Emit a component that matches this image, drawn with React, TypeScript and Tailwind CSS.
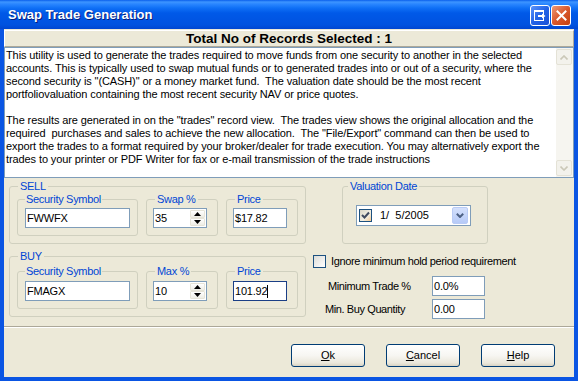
import React from "react";

const lines: string[] = [
  "This utility is used to generate the trades required to move funds from one security to another in the selected",
  "accounts. This is typically used to swap mutual funds or to generated trades into or out of a security, where the",
  'second security is "(CASH)" or a money market fund.  The valuation date should be the most recent',
  "portfoliovaluation containing the most recent security NAV or price quotes.",
  "",
  'The results are generated in on the "trades" record view.  The trades view shows the original allocation and the',
  'required  purchases and sales to achieve the new allocation.  The "File/Export" command can then be used to',
  "export the trades to a format required by your broker/dealer for trade execution. You may alternatively export the",
  "trades to your printer or PDF Writer for fax or e-mail transmission of the trade instructions",
];

function TextBox({ value, w, focused }: { value: string; w: string; focused?: boolean }) {
  return (
    <div
      className={`${w} h-[20px] border ${focused ? "border-[#1b3f86]" : "border-[#7f9db9]"} bg-white flex items-center pl-[1px] text-[11px] leading-[18px] text-black tracking-[-0.2px]`}
    >
      <span>{value}</span>
      {focused && <span className="inline-block w-[1px] h-[13px] bg-black" />}
    </div>
  );
}

function Arrow({ up }: { up?: boolean }) {
  return (
    <svg width="7" height="4" viewBox="0 0 7 4">
      {up ? <path d="M3.5 0 L7 4 L0 4 Z" fill="#000" /> : <path d="M0 0 L7 0 L3.5 4 Z" fill="#000" />}
    </svg>
  );
}

function Spin({ value }: { value: string }) {
  return (
    <div className="w-[54px] h-[20px] border border-[#7f9db9] bg-white flex text-[11px] leading-[18px] text-black">
      <span className="flex-1 pl-[1px]">{value}</span>
      <div className="w-[16px] flex flex-col py-[1px] pr-[1px]">
        <div className="flex-1 bg-[linear-gradient(to_bottom,#ffffff,#eeede5)] border border-[#e6e4d8] rounded-[1px] flex items-center justify-center">
          <Arrow up />
        </div>
        <div className="flex-1 bg-[linear-gradient(to_bottom,#ffffff,#eeede5)] border border-[#e6e4d8] rounded-[1px] flex items-center justify-center">
          <Arrow />
        </div>
      </div>
    </div>
  );
}

function Btn({ first, rest }: { first: string; rest: string }) {
  return (
    <div className="w-[74px] h-[23px] rounded-[3px] border border-[#003c74] bg-[linear-gradient(to_bottom,#ffffff_0%,#f7f6f2_50%,#ebe8dc_85%,#d8d3c3_100%)] flex items-center justify-center text-[11px] text-black">
      <span className="underline underline-offset-[1px]">{first}</span>
      <span>{rest}</span>
    </div>
  );
}

const LEG = "text-[11px] leading-[13px] text-[#0046d5] tracking-[-0.3px]";

function Row({ kind, sym, spin, price, focused, ptInner }: { kind: string; sym: string; spin: string; price: string; focused?: boolean; ptInner: string }) {
  const inPt = kind === "SELL" ? "pt-[2px]" : "pt-[3px]";
  return (
    <fieldset className={`w-[297px] border border-[#d0d0bf] rounded-[3px] pl-[7px] pr-[7px] pb-[7px] ${ptInner}`}>
      <legend className={`ml-[1px] px-[2px] ${LEG}`}>{kind}</legend>
      <div className="flex gap-[8px]">
        <fieldset className="w-[121px] border border-[#d0d0bf] rounded-[3px] pl-[7px] pb-[7px]">
          <legend className={`px-[1px] ${LEG}`}>Security Symbol</legend>
          <div className={inPt}>
            <TextBox value={sym} w="w-[105px]" />
          </div>
        </fieldset>
        <fieldset className="w-[72px] border border-[#d0d0bf] rounded-[3px] pl-[6px] pb-[7px]">
          <legend className={`ml-[2px] px-[2px] ${LEG}`}>{kind === "SELL" ? "Swap %" : "Max %"}</legend>
          <div className={inPt}>
            <Spin value={spin} />
          </div>
        </fieldset>
        <fieldset className="w-[72px] border border-[#d0d0bf] rounded-[3px] pl-[6px] pb-[7px]">
          <legend className={`ml-[2px] px-[2px] ${LEG}`}>Price</legend>
          <div className={inPt}>
            <TextBox value={price} w="w-[54px]" focused={focused} />
          </div>
        </fieldset>
      </div>
    </fieldset>
  );
}

export default function App() {
  return (
    <div className="w-[578px] h-[381px] flex flex-col bg-[#0a55e3] font-['Liberation_Sans',Arial,sans-serif] overflow-hidden">
      {/* Title bar */}
      <div className="h-[29px] shrink-0 flex items-center justify-between pl-[8px] pr-[7px] bg-[linear-gradient(to_bottom,#0a5fec_0px,#3d95ff_2px,#2a86ff_4px,#0f70f6_8px,#0059e8_13px,#0055e3_20px,#0052df_25px,#0046d0_29px)]">
        <span className="text-white font-bold text-[13px] [text-shadow:1px_1px_0_#0a1e7a]">Swap Trade Generation</span>
        <div className="flex gap-[1px] mt-[2px]">
          <div className="w-[20px] h-[21px] rounded-[3px] border border-white bg-[linear-gradient(135deg,#5b95fb,#2262e6_50%,#1a52d6)] flex items-center justify-center">
            <svg width="12" height="11" viewBox="0 0 12 11">
              <rect x="0.5" y="0.5" width="9" height="10" fill="none" stroke="#fff" strokeWidth="1" />
              <rect x="0" y="0" width="10" height="2" fill="#fff" />
              <path d="M4 6 H10" stroke="#fff" strokeWidth="2" />
              <path d="M8 3.5 L11.5 6 L8 8.5 Z" fill="#fff" />
            </svg>
          </div>
          <div className="w-[20px] h-[21px] rounded-[3px] border border-white bg-[linear-gradient(135deg,#ee9a77,#d9582c_50%,#c4410f)] flex items-center justify-center">
            <svg width="11" height="11" viewBox="0 0 11 11">
              <path d="M1.5 1.5 L9.5 9.5 M9.5 1.5 L1.5 9.5" stroke="#fff" strokeWidth="2" strokeLinecap="square" />
            </svg>
          </div>
        </div>
      </div>

      {/* Body */}
      <div className="flex-1 mx-[4px] mb-[4px] bg-[#ece9d8] flex flex-col pt-[1px] text-black">
        <div className="h-[17px] border-t border-l border-white border-b border-r border-b-[#aca899] border-r-[#aca899] flex items-center justify-center">
          <span className="font-bold text-[13.5px] leading-[15px]">Total No of Records Selected : 1</span>
        </div>

        <div className="h-[131px] border border-[#7f9db9] bg-white flex">
          <div className="flex-1 pl-[1px] pt-[1px] text-[11px] leading-[13px] whitespace-pre tracking-[-0.1px]">
            {lines.map((l, i) => (
              <div key={i} className="h-[13px]">
                {l}
              </div>
            ))}
          </div>
          <div className="w-[17px] flex flex-col bg-[#f6f5f0] justify-between py-[1px] pr-[1px]">
            <div className="h-[16px] rounded-[2px] border border-[#e4e2d6] bg-[#f3f2ec] flex items-center justify-center">
              <svg width="8" height="5" viewBox="0 0 8 5">
                <path d="M0.5 4.5 L4 1 L7.5 4.5" fill="none" stroke="#cbc8b8" strokeWidth="1.6" />
              </svg>
            </div>
            <div className="h-[16px] rounded-[2px] border border-[#e4e2d6] bg-[#f3f2ec] flex items-center justify-center">
              <svg width="8" height="5" viewBox="0 0 8 5">
                <path d="M0.5 0.5 L4 4 L7.5 0.5" fill="none" stroke="#cbc8b8" strokeWidth="1.6" />
              </svg>
            </div>
          </div>
        </div>

        <div className="flex pl-[5px] pt-[2px] items-start">
          {/* left column */}
          <div className="flex flex-col gap-[6px]">
            <Row kind="SELL" sym="FWWFX" spin="35" price="$17.82" ptInner="pt-0" />
            <Row kind="BUY" sym="FMAGX" spin="10" price="101.92" focused ptInner="pt-[2px]" />
          </div>

          {/* right column */}
          <div className="flex flex-col text-[11px]">
            <fieldset className="ml-[36px] w-[146px] border border-[#d0d0bf] rounded-[3px] pl-[5px] pt-[12px] pb-[17px]">
              <legend className={`px-[2px] ${LEG}`}>Valuation Date</legend>
              <div className="ml-[8px] w-[115px] h-[21px] border border-[#7f9db9] bg-white flex items-center">
                <div className="ml-[2px] w-[13px] h-[13px] border border-[#1c5180] bg-[linear-gradient(135deg,#d9d6c6,#f2efe4_60%,#f6c98f)] flex items-center justify-center">
                  <svg width="9" height="9" viewBox="0 0 9 9">
                    <path d="M1 4 L3.5 6.5 L8 1.5" fill="none" stroke="#3f4a5f" strokeWidth="2" />
                  </svg>
                </div>
                <span className="ml-[8px] whitespace-pre text-[11px]">1/  5/2005</span>
                <div className="ml-auto mr-[2px] w-[16px] h-[17px] rounded-[2px] border border-[#b9cbf5] bg-[linear-gradient(to_bottom,#d4e0fc,#b6caf7)] flex items-center justify-center">
                  <svg width="8" height="5" viewBox="0 0 8 5">
                    <path d="M0.8 0.8 L4 4 L7.2 0.8" fill="none" stroke="#4d6185" strokeWidth="2" />
                  </svg>
                </div>
              </div>
            </fieldset>

            <div className="ml-[7px] mt-[11px] flex items-center gap-[5px]">
              <div className="w-[13px] h-[13px] border border-[#1c5180] bg-[linear-gradient(135deg,#dcdcd7,#ffffff)]" />
              <span className="leading-[13px] tracking-[-0.35px]">Ignore minimum hold period requirement</span>
            </div>

            <div className="ml-[19px] mt-[8px] flex flex-col gap-[3px] tracking-[-0.4px]">
              <div className="flex items-center">
                <span className="w-[107px] pl-[3px]">Minimum Trade %</span>
                <TextBox value="0.0%" w="w-[53px]" />
              </div>
              <div className="flex items-center">
                <span className="w-[107px]">Min. Buy Quantity</span>
                <TextBox value="0.00" w="w-[53px]" />
              </div>
            </div>
          </div>
        </div>

        <div className="mt-[7px] border-t border-[#aca899] border-b border-b-white" />

        <div className="mt-[16px] flex justify-end pr-[19px] gap-[21px]">
          <Btn first="O" rest="k" />
          <Btn first="C" rest="ancel" />
          <Btn first="H" rest="elp" />
        </div>
      </div>
    </div>
  );
}
